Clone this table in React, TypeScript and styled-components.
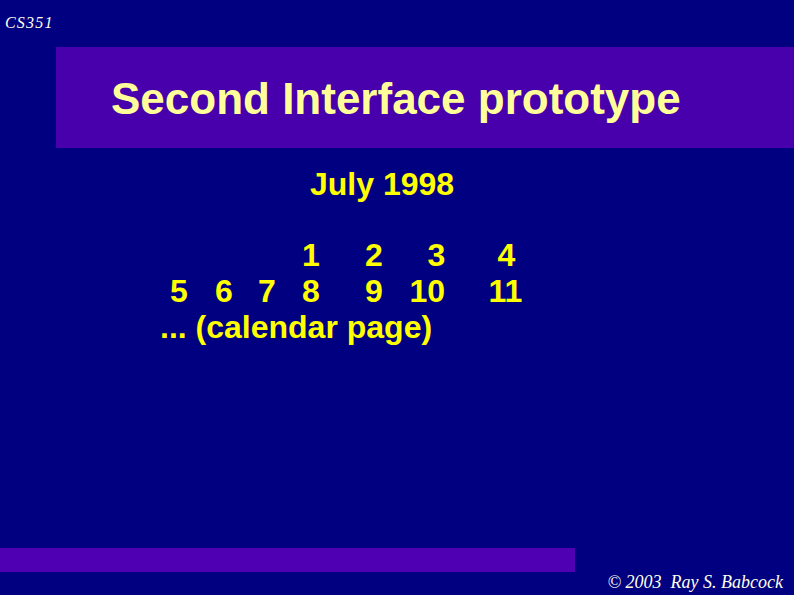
import React from "react";
import styled, { createGlobalStyle } from "styled-components";

const GlobalStyle = createGlobalStyle`
  html, body { margin: 0; padding: 0; background: #000080; }
  #root { width: 794px; height: 595px; }
`;

const Slide = styled.div`
  width: 794px;
  height: 595px;
  background: #000080;
  display: flex;
  flex-direction: column;
  overflow: hidden;
`;

const CourseTag = styled.div`
  height: 47px;
  box-sizing: border-box;
  padding: 13px 0 0 5px;
  font-family: "Liberation Serif", "Times New Roman", serif;
  font-style: italic;
  font-size: 16px;
  line-height: 20px;
  letter-spacing: 1.2px;
  color: #fffff0;
`;

const Banner = styled.div`
  margin-left: 56px;
  height: 101px;
  background: #4700ab;
  display: flex;
  align-items: center;
  padding-left: 55px;
  box-sizing: border-box;
`;

const Title = styled.h1`
  margin: 0;
  font-family: "Liberation Sans", Arial, sans-serif;
  font-weight: bold;
  font-size: 44px;
  line-height: 50px;
  color: #ffff99;
  padding-top: 3px;
`;

const Body = styled.div`
  flex: 1;
  display: flex;
  flex-direction: column;
  font-family: "Liberation Sans", Arial, sans-serif;
  font-weight: bold;
  font-size: 32px;
  line-height: 36px;
  color: #ffff00;
`;

const DateLine = styled.div`
  margin-top: 18px;
  padding-left: 310px;
`;

const Calendar = styled.div`
  margin-top: 35px;
  padding-left: 160px;
  display: grid;
  grid-template-columns: 55px 43px 44px 63px 44.5px 79px 36px;
  grid-auto-rows: 36px;
`;

const Day = styled.span<{ $col: number; $indent?: number; $center?: boolean }>`
  grid-column: ${(p) => p.$col};
  padding-left: ${(p) => p.$indent ?? 0}px;
  text-align: ${(p) => (p.$center ? "center" : "left")};
  white-space: pre;
`;

const Note = styled.div`
  grid-column: 1 / -1;
  white-space: pre;
`;

const Footer = styled.div`
  display: flex;
  flex-direction: column;
`;

const Bar = styled.div`
  width: 575px;
  height: 24px;
  background: #4e00b2;
`;

const Copyright = styled.div`
  height: 23px;
  text-align: right;
  padding-right: 11px;
  font-family: "Liberation Serif", "Times New Roman", serif;
  font-style: italic;
  font-size: 18px;
  line-height: 21px;
  color: #ffffe8;
  white-space: pre;
`;

const row1: { d: string; col: number; indent?: number; center?: boolean }[] = [
  { d: "1", col: 4 },
  { d: "2", col: 5 },
  { d: "3", col: 6, indent: 18 },
  { d: "4", col: 7, center: true },
];

const row2: { d: string; col: number; indent?: number }[] = [
  { d: "5", col: 1, indent: 10 },
  { d: "6", col: 2 },
  { d: "7", col: 3 },
  { d: "8", col: 4 },
  { d: "9", col: 5 },
  { d: "10", col: 6 },
  { d: "11", col: 7 },
];

export default function App() {
  return (
    <>
      <GlobalStyle />
      <Slide>
        <CourseTag>CS351</CourseTag>
        <Banner>
          <Title>Second Interface prototype</Title>
        </Banner>
        <Body>
          <DateLine>July 1998</DateLine>
          <Calendar>
            {row1.map((c) => (
              <Day key={c.d} $col={c.col} $indent={c.indent} $center={c.center} style={{ gridRow: 1 }}>
                {c.d}
              </Day>
            ))}
            {row2.map((c) => (
              <Day key={c.d} $col={c.col} $indent={c.indent} style={{ gridRow: 2 }}>
                {c.d}
              </Day>
            ))}
            <Note style={{ gridRow: 3 }}>... (calendar page)</Note>
          </Calendar>
        </Body>
        <Footer>
          <Bar />
          <Copyright>© 2003  Ray S. Babcock</Copyright>
        </Footer>
      </Slide>
    </>
  );
}
